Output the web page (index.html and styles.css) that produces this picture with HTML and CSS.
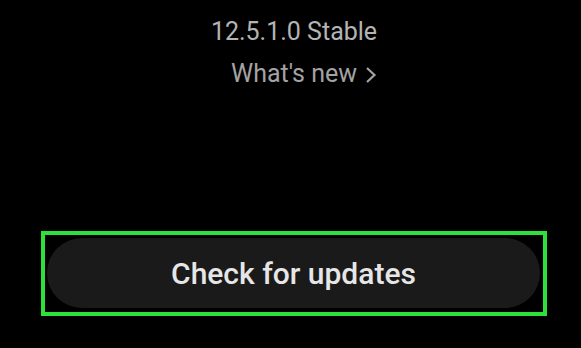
FILE: index.html
```html
<!DOCTYPE html>
<html>
<head>
<meta charset="utf-8">
<link rel="stylesheet" href="styles.css">
</head>
<body>
<main class="screen">
  <div class="version">12.5.1.0 Stable</div>
  <div class="whats-new">What's new
    <svg class="chev" width="12" height="18" viewBox="0 0 12 18"><path d="M2 2 L9.5 9 L2 16" fill="none" stroke="#a3a3a3" stroke-width="2.2"/></svg>
  </div>
  <div class="spacer"></div>
  <div class="highlight">
    <button class="check">Check for updates</button>
  </div>
</main>
</body>
</html>
```
FILE: styles.css
```css
html, body {
  margin: 0;
  padding: 0;
  background: #000;
}
.screen {
  width: 581px;
  height: 348px;
  box-sizing: border-box;
  padding: 15px 34px 32px 41px;
  display: flex;
  flex-direction: column;
  align-items: center;
  font-family: Roboto, "Noto Sans", sans-serif;
}
.version {
  font-size: 25px;
  line-height: 34px;
  color: #b4b4b4;
}
.whats-new {
  margin-top: 10px;
  font-size: 25px;
  line-height: 30px;
  color: #a3a3a3;
  display: flex;
  align-items: center;
  gap: 8px;
  padding-left: 20px;
}
.chev {
  margin-top: 2px;
}
.spacer {
  flex: 1;
}
.highlight {
  align-self: stretch;
  border: 4px solid #2ee03a;
  height: 85px;
  box-sizing: border-box;
  padding: 3px 3px 4px 2px;
  display: flex;
}
.check {
  flex: 1;
  border: none;
  border-radius: 35px;
  background: #1a1a1a;
  color: #e6e6e6;
  font-family: Roboto, "Noto Sans", sans-serif;
  font-weight: 500;
  font-size: 30px;
  padding: 0;
}
```
